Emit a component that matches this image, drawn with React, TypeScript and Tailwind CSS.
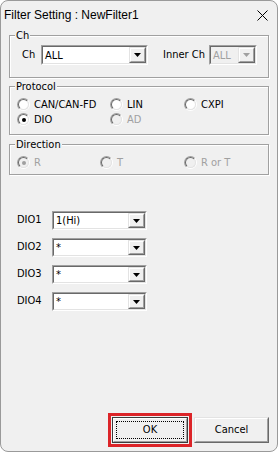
import React from 'react'

const body = "font-['DejaVu_Sans','Liberation_Sans',sans-serif] [font-stretch:condensed] text-[11px] text-black"

function Arrow({ disabled }: { disabled?: boolean }) {
  return (
    <svg width="7" height="4" viewBox="0 0 7 4">
      <path d="M0 0h7L3.5 4z" fill={disabled ? '#a0a0a0' : '#000'} />
    </svg>
  )
}

function Combo({
  value,
  className,
  disabled,
}: {
  value: string
  className: string
  disabled?: boolean
}) {
  return (
    <div
      className={`flex border border-t-[#a0a0a0] border-l-[#a0a0a0] border-r-white border-b-white ${className}`}
    >
      <div
        className={`flex flex-1 border border-t-[#696969] border-l-[#696969] border-r-[#e3e3e3] border-b-[#e3e3e3] ${
          disabled ? 'bg-[#f0f0f0] text-[#a0a0a0]' : 'bg-white'
        }`}
      >
        <div className="flex flex-1 items-center pl-[2px] leading-none">{value}</div>
        <div className="flex w-[17px] border border-t-[#e3e3e3] border-l-[#e3e3e3] border-r-[#696969] border-b-[#696969]">
          <div className="flex flex-1 items-center justify-center border border-t-white border-l-white border-r-[#a0a0a0] border-b-[#a0a0a0] bg-[#f0f0f0]">
            <Arrow disabled={disabled} />
          </div>
        </div>
      </div>
    </div>
  )
}

function Radio({
  label,
  checked,
  disabled,
}: {
  label: string
  checked?: boolean
  disabled?: boolean
}) {
  return (
    <div className="flex h-[15px] items-center">
      <span className="flex h-[13px] w-[13px] rounded-full border border-t-[#a0a0a0] border-l-[#a0a0a0] border-r-white border-b-white">
        <span
          className={`flex flex-1 items-center justify-center rounded-full border border-t-[#696969] border-l-[#696969] border-r-[#e3e3e3] border-b-[#e3e3e3] ${
            disabled ? 'bg-[#f0f0f0]' : 'bg-white'
          }`}
        >
          {checked && (
            <span
              className={`h-[4px] w-[4px] rounded-full ${
                disabled ? 'bg-[#a0a0a0]' : 'bg-black'
              }`}
            />
          )}
        </span>
      </span>
      <span className={`ml-[4px] leading-none ${disabled ? 'text-[#a0a0a0]' : ''}`}>
        {label}
      </span>
    </div>
  )
}

function Group({
  title,
  className,
  children,
}: {
  title: string
  className: string
  children: React.ReactNode
}) {
  return (
    <div
      className={`border border-[#a0a0a0] shadow-[inset_1px_1px_0_#fff,1px_1px_0_#fff] ${className}`}
    >
      <div className="-mt-[7px] ml-[5px] w-fit bg-[#f0f0f0] px-px leading-[13px]">
        {title}
      </div>
      {children}
    </div>
  )
}

export default function App() {
  const dios = [
    { name: 'DIO1', value: '1(Hi)' },
    { name: 'DIO2', value: '*' },
    { name: 'DIO3', value: '*' },
    { name: 'DIO4', value: '*' },
  ]

  return (
    <div className="h-[452px] w-[278px] bg-white">
      <div className="flex h-full flex-col rounded-[8px] border border-[#9a9a9a] bg-[#f0f0f0]">
        <div className="flex h-[28px] items-center justify-between pl-[3px] pr-[9px]">
          <span className="font-['Liberation_Sans',sans-serif] text-[12px] text-black">
            Filter Setting : NewFilter1
          </span>
          <svg width="11" height="11" viewBox="0 0 11 11">
            <path d="M0.5 0.5L10.5 10.5M10.5 0.5L0.5 10.5" stroke="#000" strokeWidth="1" />
          </svg>
        </div>

        <div className={`flex flex-1 flex-col px-[8px] ${body}`}>
          <Group title="Ch" className="mt-[6px] h-[43px]">
            <div className="mt-[3px] flex items-center pl-[12px]">
              <span className="w-[19px]">Ch</span>
              <Combo value="ALL" className="h-[20px] w-[107px]" />
              <span className="ml-[15px] w-[46px]">Inner Ch</span>
              <Combo value="ALL" className="h-[20px] w-[48px]" disabled />
            </div>
          </Group>

          <Group title="Protocol" className="mt-[8px] h-[49px]">
            <div className="mt-[4px] grid grid-cols-[93px_74px_1fr] pl-[7px]">
              <Radio label="CAN/CAN-FD" />
              <Radio label="LIN" />
              <Radio label="CXPI" />
              <Radio label="DIO" checked />
              <Radio label="AD" disabled />
            </div>
          </Group>

          <Group title="Direction" className="mt-[9px] h-[31px]">
            <div className="mt-[4px] grid grid-cols-[83px_84px_1fr] pl-[7px]">
              <Radio label="R" checked disabled />
              <Radio label="T" disabled />
              <Radio label="R or T" disabled />
            </div>
          </Group>

          <div className="mt-[36px] flex flex-col gap-[8px] pl-[8px]">
            {dios.map((d) => (
              <div key={d.name} className="flex items-center">
                <span className="w-[35px]">{d.name}</span>
                <Combo value={d.value} className="h-[19px] w-[95px]" />
              </div>
            ))}
          </div>

          <div className="mt-auto flex items-center justify-end pb-[4px]">
            <div className="border-[3px] border-[#dc2428] p-px">
              <div className="flex h-[26px] w-[76px] border border-[#3c3c3c]">
                <div className="flex flex-1 border border-t-white border-l-white border-r-[#a0a0a0] border-b-[#a0a0a0] bg-[#f0f0f0] p-[2px]">
                  <div className="flex flex-1 items-center justify-center border border-dotted border-black">
                    OK
                  </div>
                </div>
              </div>
            </div>
            <div className="ml-[2px] flex h-[26px] w-[75px] border border-t-[#e3e3e3] border-l-[#e3e3e3] border-r-[#696969] border-b-[#696969]">
              <div className="flex flex-1 items-center justify-center border border-t-white border-l-white border-r-[#a0a0a0] border-b-[#a0a0a0] bg-[#f0f0f0]">
                Cancel
              </div>
            </div>
          </div>
        </div>
      </div>
    </div>
  )
}
